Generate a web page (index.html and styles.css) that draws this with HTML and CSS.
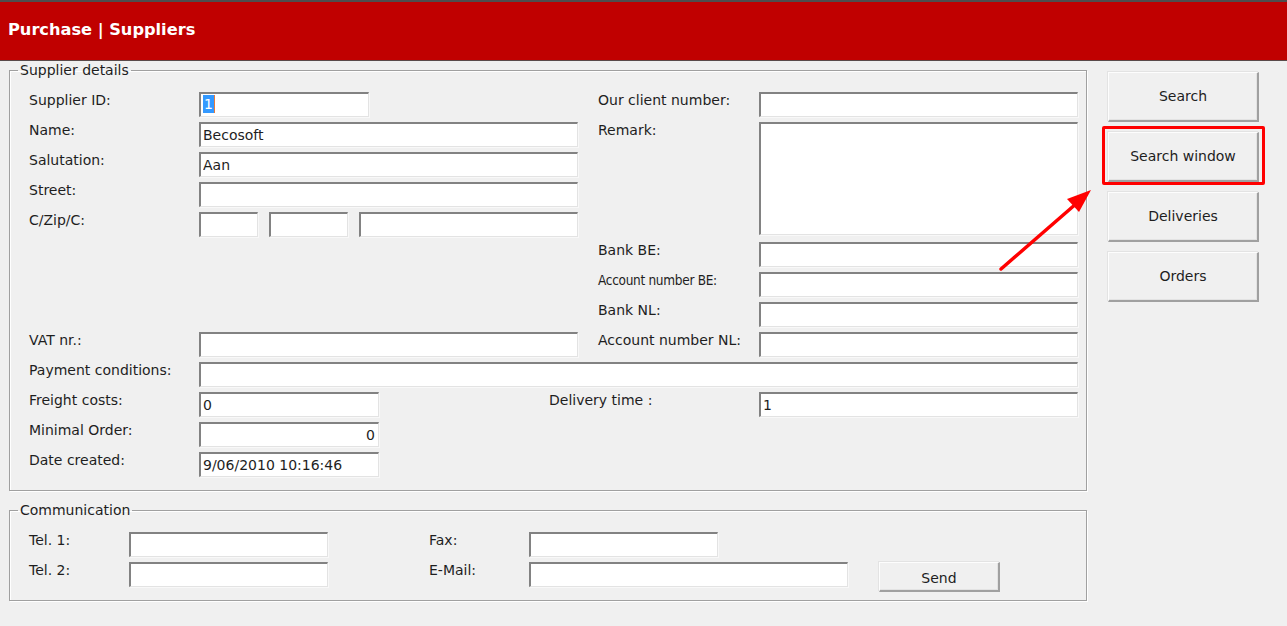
FILE: index.html
```html
<!DOCTYPE html>
<html lang="en">
<head>
  <meta charset="UTF-8" />
  <title>Purchase | Suppliers</title>
  <link rel="stylesheet" href="styles.css">
</head>
<body>
  <!-- Title bar -->
  <header class="title-bar">
    <h1>Purchase | Suppliers</h1>
  </header>

  <main class="screen">
    <div class="forms">
      <!-- Supplier details -->
      <fieldset class="group">
        <legend>Supplier details</legend>
        <div class="details-grid">
          <label class="lbl r1 c1">Supplier ID:</label>
          <div class="box r1 c2 w-id"><span class="sel">1</span></div>
          <label class="lbl r1 c3">Our client number:</label>
          <input class="box r1 c4" type="text" />

          <label class="lbl r2 c1">Name:</label>
          <input class="box r2 c2" type="text" value="Becosoft" />
          <label class="lbl r2 c3">Remark:</label>
          <textarea class="box memo c4"></textarea>

          <label class="lbl r3 c1">Salutation:</label>
          <input class="box r3 c2" type="text" value="Aan" />

          <label class="lbl r4 c1">Street:</label>
          <input class="box r4 c2" type="text" />

          <label class="lbl r5 c1">C/Zip/C:</label>
          <div class="zip-row r5 c2">
            <input class="box w-country" type="text" />
            <input class="box w-zip" type="text" />
            <input class="box w-city" type="text" />
          </div>

          <label class="lbl r6 c3">Bank BE:</label>
          <input class="box r6 c4" type="text" />
          <label class="lbl narrow r7 c3">Account number BE:</label>
          <input class="box r7 c4" type="text" />
          <label class="lbl r8 c3">Bank NL:</label>
          <input class="box r8 c4" type="text" />

          <label class="lbl r9 c1">VAT nr.:</label>
          <input class="box r9 c2" type="text" />
          <label class="lbl r9 c3">Account number NL:</label>
          <input class="box r9 c4" type="text" />

          <label class="lbl r10 c1">Payment conditions:</label>
          <input class="box r10 full" type="text" />

          <label class="lbl r11 c1">Freight costs:</label>
          <input class="box r11 c2 w-num" type="text" value="0" />
          <label class="lbl r11 delivery">Delivery time :</label>
          <input class="box r11 c4" type="text" value="1" />

          <label class="lbl r12 c1">Minimal Order:</label>
          <input class="box r12 c2 w-num right" type="text" value="0" />

          <label class="lbl r13 c1">Date created:</label>
          <input class="box r13 c2 w-num" type="text" value="9/06/2010 10:16:46" />
        </div>
      </fieldset>

      <!-- Communication -->
      <fieldset class="group comm">
        <legend>Communication</legend>
        <div class="comm-grid">
          <label class="lbl">Tel. 1:</label>
          <input class="box w-tel" type="text" />
          <label class="lbl">Fax:</label>
          <input class="box w-fax" type="text" />
          <span></span>

          <label class="lbl">Tel. 2:</label>
          <input class="box w-tel" type="text" />
          <label class="lbl">E-Mail:</label>
          <input class="box w-mail" type="text" />
          <button class="btn send">Send</button>
        </div>
      </fieldset>
    </div>

    <!-- Actions -->
    <div class="actions">
      <button class="btn big">Search</button>
      <button class="btn big">Search window</button>
      <button class="btn big">Deliveries</button>
      <button class="btn big">Orders</button>
    </div>
  </main>

  <!-- Callout over the search window button -->
  <div class="callout-box"></div>
  <svg class="callout-arrow" width="120" height="100" viewBox="0 0 120 100">
    <line x1="8" y1="92" x2="84" y2="26" stroke="#ff0000" stroke-width="3.5" stroke-linecap="round" />
    <polygon points="98,13 74,22 86,35" fill="#ff0000" />
  </svg>
</body>
</html>
```

FILE: styles.css
```css
body {
  margin: 0;
  font-family: "DejaVu Sans", Verdana, sans-serif;
  font-size: 14px;
  color: #1e1e1e;
  background: #f0f0f0;
  width: 1287px;
  height: 626px;
  overflow: hidden;
  position: relative;
}
.title-bar {
  height: 58px;
  background: #c00000;
  border-top: 2px solid #4e4e4e;
  border-bottom: 1px solid #5a4a4a;
  display: flex;
  align-items: center;
  padding-left: 8px;
}
.title-bar h1 {
  margin: 0;
  margin-top: -4px;
  font-size: 16.2px;
  font-weight: bold;
  color: #fff;
}
.screen {
  display: flex;
  align-items: flex-start;
}
.forms {
  padding-left: 9px;
  width: 1078px;
}

/* group boxes */
.group {
  margin: 1px 0 0 0;
  padding: 0;
  border: 1px solid #a0a0a0;
  box-shadow: inset 1px 1px 0 #fff, 1px 1px 0 #fff;
  min-width: 0;
}
.group legend {
  margin-left: 8px;
  padding: 0 2px;
  line-height: 16px;
}
.group.comm {
  margin-top: 11px;
}
.details-grid {
  display: grid;
  grid-template-columns: 170px 379px 181px 319px;
  grid-template-rows: repeat(13, 30px);
  padding: 12px 0 10px 19px;
}
.details-grid .c3 { padding-left: 20px; }

.r1 { grid-row: 1; }
.r2 { grid-row: 2; }
.r3 { grid-row: 3; }
.r4 { grid-row: 4; }
.r5 { grid-row: 5; }
.r6 { grid-row: 6; }
.r7 { grid-row: 7; }
.r8 { grid-row: 8; }
.r9 { grid-row: 9; }
.r10 { grid-row: 10; }
.r11 { grid-row: 11; }
.r12 { grid-row: 12; }
.r13 { grid-row: 13; }
.c1 { grid-column: 1; }
.c2 { grid-column: 2; }
.c3 { grid-column: 3; }
.c4 { grid-column: 4; }
.full { grid-column: 2 / 5; }

.lbl {
  align-self: start;
  padding-top: 2px;
  white-space: nowrap;
  line-height: 17px;
}
.lbl.narrow {
  font-family: "DejaVu Sans Condensed", "DejaVu Sans", sans-serif;
  font-size: 13.5px;
  letter-spacing: -0.3px;
}
.lbl.delivery {
  grid-column: 2 / 4;
  padding-left: 350px;
}

/* sunken edit boxes */
.box {
  box-sizing: border-box;
  height: 25px;
  align-self: start;
  margin-top: 2px;
  padding: 0 2px;
  font: inherit;
  line-height: 19px;
  color: #1e1e1e;
  background: #fff;
  border-top: 2px solid #828282;
  border-left: 2px solid #828282;
  border-right: 1px solid #e3e3e3;
  border-bottom: 1px solid #e3e3e3;
  box-shadow: 1px 1px 0 #f8f8f8;
  outline: none;
}
.details-grid > .box { width: 100%; }
.details-grid > .w-id { width: 170px; padding-top: 1px; }
.details-grid > .w-num { width: 180px; }
.box.right { text-align: right; padding-right: 3px; }
.sel {
  display: inline-block;
  background: #3399ff;
  color: #fff;
  line-height: 18px;
  padding: 0 1px;
  border-right: 1px solid #e87a3a;
}
.memo {
  grid-row: 2 / 6;
  height: 113px;
  resize: none;
}
.zip-row {
  display: flex;
  gap: 11px;
  align-self: start;
}
.zip-row .box { margin-top: 2px; }
.w-country { width: 59px; }
.w-zip { width: 79px; }
.w-city { width: 219px; }

.comm-grid {
  display: grid;
  grid-template-columns: 100px 300px 100px 350px 1fr;
  grid-template-rows: 30px 30px;
  padding: 12px 0 10px 19px;
  align-items: start;
}
.w-tel { width: 199px; }
.w-fax { width: 189px; }
.w-mail { width: 319px; }

/* raised push buttons */
.btn {
  box-sizing: border-box;
  font: inherit;
  color: #1e1e1e;
  background: #f0f0f0;
  border-top: 1px solid #fdfdfd;
  border-left: 1px solid #fdfdfd;
  border-right: 2px solid #a0a0a0;
  border-bottom: 2px solid #a0a0a0;
  box-shadow: inset -1px -1px 0 #e3e3e3, -1px -1px 0 #e3e3e3;
  padding: 0;
}
.send {
  width: 121px;
  height: 30px;
  margin-top: 2px;
  padding-top: 2px;
}
.actions {
  display: flex;
  flex-direction: column;
  gap: 10px;
  margin-left: 21px;
  margin-top: 11px;
}
.btn.big {
  width: 151px;
  height: 50px;
  padding-bottom: 2px;
}

/* red callout drawn on top */
.callout-box {
  position: absolute;
  left: 1102px;
  top: 126px;
  width: 157px;
  height: 53px;
  border: 3px solid #ff0000;
  border-radius: 2px;
}
.callout-arrow {
  position: absolute;
  left: 993px;
  top: 177px;
}
```
